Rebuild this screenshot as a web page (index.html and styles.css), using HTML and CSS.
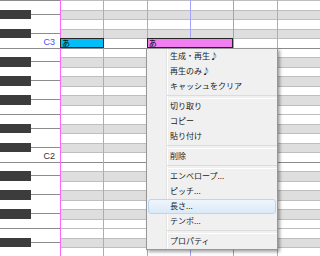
FILE: index.html
```html
<!DOCTYPE html>
<html lang="ja">
<head>
<meta charset="utf-8">
<title>Piano roll</title>
<link rel="stylesheet" href="styles.css">
</head>
<body>
<div class="roll">
  <div class="keys">
    <div class="key edge"></div>
    <div class="key black"><span class="bk"></span><span class="seam"></span></div>
    <div class="key"></div>
    <div class="key black"><span class="bk"></span><span class="seam"></span></div>
    <div class="key"><span class="oct-name current">C3</span></div>
    <div class="key edge"></div>
    <div class="key black"><span class="bk"></span><span class="seam"></span></div>
    <div class="key"></div>
    <div class="key black"><span class="bk"></span><span class="seam"></span></div>
    <div class="key"></div>
    <div class="key black"><span class="bk"></span><span class="seam"></span></div>
    <div class="key"></div>
    <div class="key edge"></div>
    <div class="key black"><span class="bk"></span><span class="seam"></span></div>
    <div class="key"></div>
    <div class="key black"><span class="bk"></span><span class="seam"></span></div>
    <div class="key"><span class="oct-name">C2</span></div>
    <div class="key edge"></div>
    <div class="key black"><span class="bk"></span><span class="seam"></span></div>
    <div class="key"></div>
    <div class="key black"><span class="bk"></span><span class="seam"></span></div>
    <div class="key"></div>
    <div class="key black"><span class="bk"></span><span class="seam"></span></div>
    <div class="key"></div>
    <div class="key edge"></div>
    <div class="key black"><span class="bk"></span><span class="seam"></span></div>
    <div class="key"></div>
  </div>
  <div class="grid">
    <div class="row"></div>
    <div class="row black"></div>
    <div class="row"></div>
    <div class="row black"></div>
    <div class="row">
      <div class="note sel" style="left:0;width:43.5px">あ</div>
      <div class="note pink" style="left:86.67px;width:86.67px">あ</div>
    </div>
    <div class="row oct"></div>
    <div class="row black"></div>
    <div class="row"></div>
    <div class="row black"></div>
    <div class="row"></div>
    <div class="row black"></div>
    <div class="row"></div>
    <div class="row"></div>
    <div class="row black"></div>
    <div class="row"></div>
    <div class="row black"></div>
    <div class="row"></div>
    <div class="row oct"></div>
    <div class="row black"></div>
    <div class="row"></div>
    <div class="row black"></div>
    <div class="row"></div>
    <div class="row black"></div>
    <div class="row"></div>
    <div class="row"></div>
    <div class="row black"></div>
    <div class="row"></div>
    <div class="beats">
      <div class="beat bar"></div>
      <div class="beat"></div>
      <div class="beat"></div>
      <div class="beat"></div>
      <div class="beat bar"></div>
      <div class="beat"></div>
    </div>
  </div>
</div>
<div class="menu">
  <div class="item">生成・再生♪</div>
  <div class="item">再生のみ♪</div>
  <div class="item">キャッシュをクリア</div>
  <div class="sep"></div>
  <div class="item">切り取り</div>
  <div class="item">コピー</div>
  <div class="item">貼り付け</div>
  <div class="sep"></div>
  <div class="item">削除</div>
  <div class="sep"></div>
  <div class="item">エンベロープ...</div>
  <div class="item">ピッチ...</div>
  <div class="item hover">長さ...</div>
  <div class="item">テンポ...</div>
  <div class="sep"></div>
  <div class="item">プロパティ</div>
</div>
</body>
</html>
```

FILE: styles.css
```css
* { box-sizing: border-box; }
html, body { margin: 0; padding: 0; }
body {
  width: 320px;
  height: 256px;
  overflow: hidden;
  background: #fff;
  font-family: "Liberation Sans", Arial, sans-serif;
  position: relative;
}
.roll { display: flex; height: 256px; }

.keys { width: 60px; flex: none; background: #fff; }
.key {
  height: 9.5px;
  display: flex;
  align-items: center;
}
.key.edge { border-top: 1px solid #8c8c8c; }
.bk { width: 31px; align-self: stretch; background: #3c3c3c; }
.seam { flex: 1; height: 1px; background: #8c8c8c; }
.oct-name {
  margin-left: auto;
  padding-right: 5px;
  font-size: 9px;
  line-height: 1;
  color: #333;
}
.oct-name.current { color: #4b4bff; }

.grid { flex: 1; position: relative; z-index: 0; }
.row {
  height: 9.5px;
  border-top: 1px solid #bebebe;
  background: #fff;
  position: relative;
}
.row.black { background: #dedede; }
.row.oct { border-top-color: #8c8c8c; }
.beats {
  position: absolute;
  inset: 0;
  display: flex;
  z-index: 1;
  pointer-events: none;
}
.beat { flex: none; width: 43.333px; border-left: 1px solid #a4a4ff; }
.beat.bar { border-left-color: #ff66ff; }

.note {
  position: absolute;
  top: -1px;
  bottom: 0;
  z-index: 2;
  border: 1px solid #262626;
  padding-left: 1px;
  display: flex;
  align-items: center;
  font-family: "Noto Sans CJK JP", sans-serif;
  font-size: 8px;
  line-height: 7.5px;
  color: #000;
}
.note.sel { background: #00bff8; }
.note.pink { background: #f27ff2; }

.menu {
  position: absolute;
  left: 146px;
  top: 48px;
  width: 132px;
  border: 1px solid #979797;
  background:
    linear-gradient(to right, transparent 19px, #e2e3e3 19px, #e2e3e3 20px, #fff 20px, #fff 21px, transparent 21px),
    #f0f0f0;
  box-shadow: 2px 2px 3px rgba(0, 0, 0, 0.35);
  font-family: "Noto Sans CJK JP", sans-serif;
  font-size: 8px;
  color: #1a1a1a;
}
.item {
  height: 15px;
  margin: 0 1px;
  padding-left: 21px;
  padding-bottom: 1px;
  display: flex;
  align-items: center;
  line-height: 1;
  border: 1px solid transparent;
  border-radius: 3px;
  white-space: nowrap;
}
.item.hover {
  background: linear-gradient(#eef5fc, #dbeaf8);
  border-color: #b9d6f2;
}
.sep {
  height: 5px;
  margin-left: 20px;
  display: flex;
  align-items: center;
}
.sep::after {
  content: "";
  flex: 1;
  height: 2px;
  border-top: 1px solid #dcdcdc;
  border-bottom: 1px solid #fff;
}
```
